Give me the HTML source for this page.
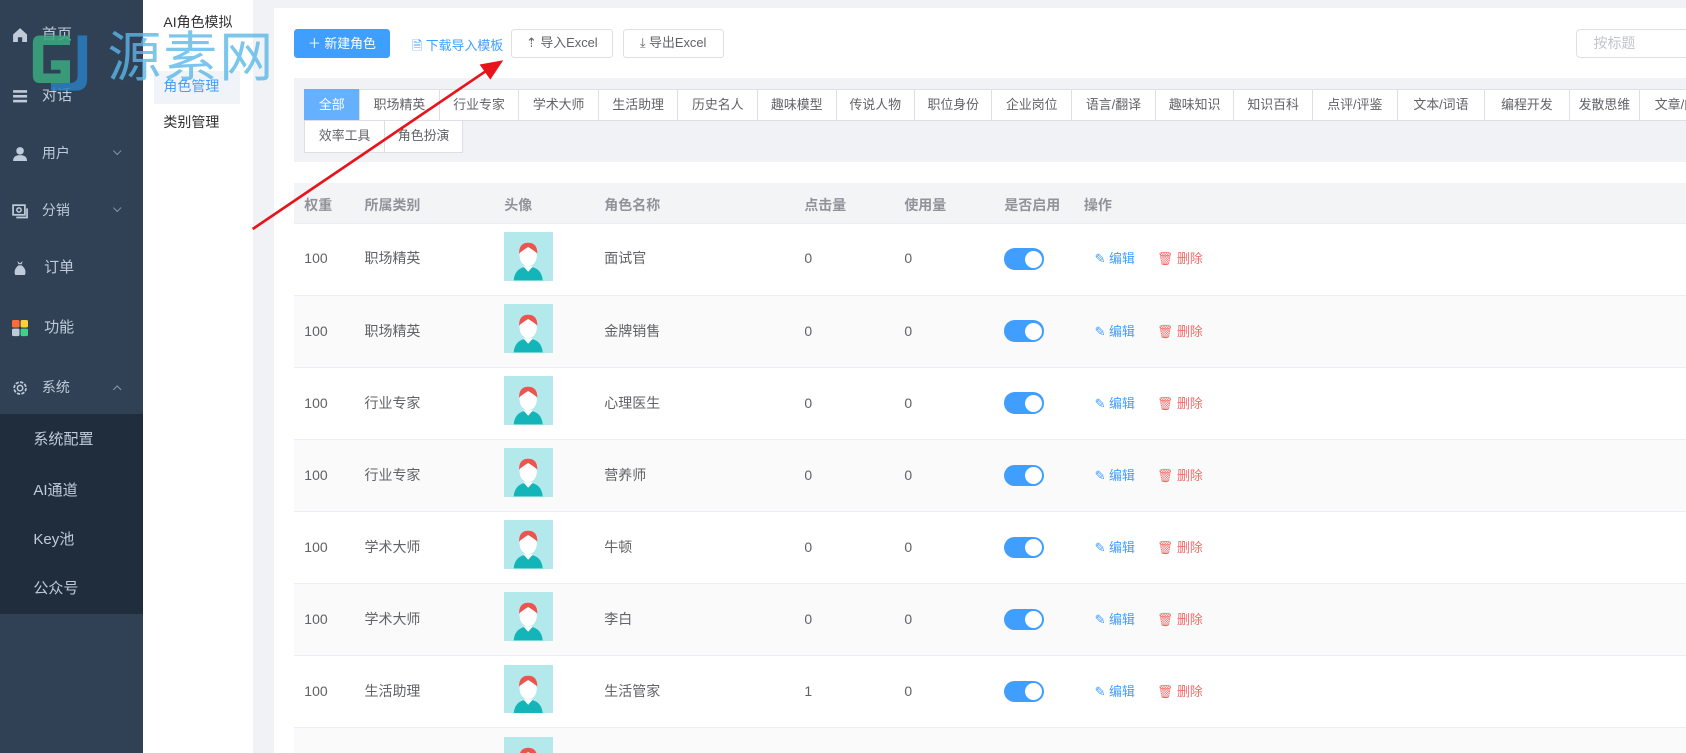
<!DOCTYPE html>
<html><head><meta charset="utf-8"><style>
*{margin:0;padding:0;box-sizing:border-box}
html,body{width:1686px;height:753px;overflow:hidden;background:#f0f2f5}
#w{zoom:1.0753;width:1568px;height:700px;position:relative;font-family:"Liberation Sans","Noto Sans CJK SC",sans-serif;font-size:13px;color:#606266;overflow:hidden}
.abs{position:absolute}
#side{left:0;top:0;width:133px;height:700px;background:#304156;color:#bfcbd9;font-size:14px}
.mi{position:absolute;left:0;width:133px;height:40px;line-height:40px}
.mi .t{position:absolute;left:39px}
.mi .ic{position:absolute;left:11px;top:13px;width:15px;height:15px}
.arr{position:absolute;left:106px;top:15px;width:6px;height:6px;border-right:1px solid #8a96a6;border-bottom:1px solid #8a96a6;transform:rotate(45deg)}
#sub{left:0;top:385px;width:133px;height:186px;background:#1f2d3d}
#sub div{position:absolute;left:31px;color:#bfcbd9;font-size:14px}
#sm{left:133px;top:0;width:102px;height:700px;background:#fff;font-size:13px;color:#303133}
#card{left:255px;top:7px;width:1313px;height:693px;background:#fff}
.btn{position:absolute;height:27px;line-height:25px;border:1px solid #dcdfe6;border-radius:3px;font-size:12px;color:#606266;text-align:center;background:#fff}
#filt{left:273px;top:73px;width:1295px;height:78px;background:#f0f2f5}
.tab{position:absolute;height:30px;line-height:28px;border:1px solid #dcdfe6;background:#fff;font-size:12px;color:#606266;text-align:center}
.row{position:absolute;left:273px;width:1295px;height:67px;border-bottom:1px solid #ebeef5;font-size:13px;color:#606266}
.row span{position:absolute;top:24px;line-height:18px;height:18px}
.sw{position:absolute;left:661px;top:23px;width:37px;height:20px;border-radius:10px;background:#409eff}
.sw:after{content:"";position:absolute;right:2px;top:2px;width:16px;height:16px;border-radius:50%;background:#fff}
.av{position:absolute;left:196px;top:8px;width:45px;height:45px;background:#b3e9ea;overflow:hidden}
</style></head><body><div id="w">
<div id="side" class="abs">
 <div class="mi" style="top:12px"><svg class="ic" viewBox="0 0 15 15"><path d="M1 7L7.5 1L14 7V14H9.5V9.5H5.5V14H1Z" fill="#bfcbd9"/></svg><span class="t">首页</span></div>
 <div class="mi" style="top:69px"><svg class="ic" viewBox="0 0 15 15"><rect x="1" y="2" width="13" height="2.4" fill="#bfcbd9"/><rect x="1" y="6.5" width="13" height="2.4" fill="#bfcbd9"/><rect x="1" y="11" width="13" height="2.4" fill="#bfcbd9"/></svg><span class="t">对话</span></div>
 <div class="mi" style="top:123px"><svg class="ic" viewBox="0 0 15 15"><circle cx="7.5" cy="4.5" r="3.5" fill="#bfcbd9"/><path d="M1 14Q1 8.5 7.5 8.5Q14 8.5 14 14Z" fill="#bfcbd9"/></svg><span class="t" style="font-size:13px">用户</span><i class="arr"></i></div>
 <div class="mi" style="top:176px"><svg class="ic" viewBox="0 0 15 15"><rect x="1" y="2" width="11" height="9" fill="none" stroke="#bfcbd9" stroke-width="1.6"/><circle cx="6.5" cy="6.5" r="2" fill="none" stroke="#bfcbd9" stroke-width="1.4"/><path d="M4 13.5H14V5" fill="none" stroke="#bfcbd9" stroke-width="1.6"/></svg><span class="t" style="font-size:13px">分销</span><i class="arr"></i></div>
 <div class="mi" style="top:229px"><svg class="ic" viewBox="0 0 15 15"><path d="M5 1L7.5 3L10 1L9 4H6Z" fill="#bfcbd9"/><path d="M6 5H9Q14 9 12 14H3Q1 9 6 5Z" fill="#bfcbd9"/></svg><span class="t" style="left:41px">订单</span></div>
 <div class="mi" style="top:285px"><svg class="ic" viewBox="0 0 15 15"><rect x="0" y="0" width="7" height="7" rx="1.5" fill="#fe6b37"/><rect x="8" y="0" width="7" height="7" rx="1.5" fill="#fcd138"/><rect x="0" y="8" width="7" height="7" rx="1.5" fill="#bfcbd9"/><rect x="8" y="8" width="7" height="7" rx="1.5" fill="#3fd08a"/></svg><span class="t" style="left:41px">功能</span></div>
 <div class="mi" style="top:340px"><svg class="ic" viewBox="0 0 15 15"><circle cx="7.5" cy="7.5" r="5.5" fill="none" stroke="#bfcbd9" stroke-width="1.6" stroke-dasharray="3 1.3"/><circle cx="7.5" cy="7.5" r="2.5" fill="none" stroke="#bfcbd9" stroke-width="1.4"/></svg><span class="t" style="font-size:13px">系统</span><i class="arr" style="transform:rotate(225deg);top:19px"></i></div>
 <div id="sub" class="abs"><div style="top:13px">系统配置</div><div style="top:60px">AI通道</div><div style="top:106px">Key池</div><div style="top:152px">公众号</div></div>
</div>
<div id="sm" class="abs">
 <div class="abs" style="left:19px;top:11px">AI角色模拟</div>
 <div class="abs" style="left:10px;top:66px;width:80px;height:31px;background:#f0f3f7"></div>
 <div class="abs" style="left:19px;top:71px;color:#409eff">角色管理</div>
 <div class="abs" style="left:19px;top:104px">类别管理</div>
</div>
<div id="card" class="abs"></div>
<!-- watermark -->
<svg class="abs" style="left:28px;top:30px;opacity:.85" width="62" height="56" viewBox="0 0 70 60"><path d="M42 2H10Q3 2 3 10V44Q3 52 10 52H42V28H22V38H32V42H14V12H42Z" fill="#3aaa80"/><path d="M50 2H60V48Q60 60 48 60H22V52H42Q50 52 50 44Z" fill="#2a7fbf"/></svg>
<div class="abs" style="left:100px;top:26px;font-size:50px;line-height:56px;color:#5bb8e8;opacity:.8;letter-spacing:2px">源素网</div>
<div class="abs" style="left:273px;top:27px;width:90px;height:27px;background:#409eff;border-radius:3px;color:#fff;font-size:12px;line-height:27px;text-align:center">＋ 新建角色</div>
<div class="abs" style="left:383px;top:33px;font-size:12px;color:#409eff">🗎 下载导入模板</div>
<div class="btn" style="left:475px;top:27px;width:95px">⇡ 导入Excel</div>
<div class="btn" style="left:579px;top:27px;width:94px">⤓ 导出Excel</div>
<div class="btn" style="left:1466px;top:27px;width:120px;text-align:left;padding-left:15px;color:#c0c4cc;font-size:13px;border-radius:4px">按标题</div>
<div id="filt" class="abs"></div>
<div class="tab" style="left:283px;top:83px;width:51px;background:#66b1ff;border-color:#66b1ff;color:#fff">全部</div>
<div class="tab" style="left:334px;top:83px;width:75px">职场精英</div>
<div class="tab" style="left:408px;top:83px;width:75px">行业专家</div>
<div class="tab" style="left:482px;top:83px;width:75px">学术大师</div>
<div class="tab" style="left:556px;top:83px;width:75px">生活助理</div>
<div class="tab" style="left:630px;top:83px;width:75px">历史名人</div>
<div class="tab" style="left:704px;top:83px;width:74px">趣味模型</div>
<div class="tab" style="left:777px;top:83px;width:74px">传说人物</div>
<div class="tab" style="left:850px;top:83px;width:73px">职位身份</div>
<div class="tab" style="left:922px;top:83px;width:75px">企业岗位</div>
<div class="tab" style="left:996px;top:83px;width:79px">语言/翻译</div>
<div class="tab" style="left:1074px;top:83px;width:74px">趣味知识</div>
<div class="tab" style="left:1147px;top:83px;width:74px">知识百科</div>
<div class="tab" style="left:1220px;top:83px;width:80px">点评/评鉴</div>
<div class="tab" style="left:1299px;top:83px;width:82px">文本/词语</div>
<div class="tab" style="left:1380px;top:83px;width:80px">编程开发</div>
<div class="tab" style="left:1459px;top:83px;width:66px">发散思维</div>
<div class="tab" style="left:1524px;top:83px;width:80px;text-align:left;padding-left:14px">文章/内容</div>
<div class="tab" style="left:283px;top:112px;width:75px">效率工具</div>
<div class="tab" style="left:357px;top:112px;width:74px">角色扮演</div>
<div class="abs" style="left:273px;top:170px;width:1295px;height:38px;background:#f3f4f6;border-bottom:1px solid #ebeef5;color:#909399;font-size:13px;font-weight:bold">
 <span class="abs" style="left:10px;top:11px">权重</span><span class="abs" style="left:66px;top:11px">所属类别</span><span class="abs" style="left:196px;top:11px">头像</span><span class="abs" style="left:289px;top:11px">角色名称</span><span class="abs" style="left:475px;top:11px">点击量</span><span class="abs" style="left:568px;top:11px">使用量</span><span class="abs" style="left:661px;top:11px">是否启用</span><span class="abs" style="left:735px;top:11px">操作</span>
</div>
<div id="rows"></div>
<script>
var d=[["职场精英","面试官",0],["职场精英","金牌销售",0],["行业专家","心理医生",0],["行业专家","营养师",0],["学术大师","牛顿",0],["学术大师","李白",0],["生活助理","生活管家",1],["生活助理","",0]];
var h="";
d.forEach(function(r,i){
var top=208+i*67;
h+='<div class="row" style="top:'+top+'px;background:'+(i%2?'#fafafa':'#fff')+'">'+
'<span style="left:10px">100</span><span style="left:66px">'+r[0]+'</span>'+
'<div class="av"><svg width="45" height="45" viewBox="0 0 45 45"><path d="M9 45Q10 33 22.5 32Q35 33 36 45Z" fill="#14b5b8"/><path d="M18 32H27L22.5 37Z" fill="#fff"/><ellipse cx="22.5" cy="22" rx="8" ry="10" fill="#fff"/><path d="M14 20Q14 10 22.5 10Q31 10 31 20Q26 16 22.5 14Q19 16 14 20Z" fill="#ef5350"/></svg></div>'+
'<span style="left:289px">'+r[1]+'</span><span style="left:475px">'+r[2]+'</span><span style="left:568px">0</span>'+
'<div class="sw"></div>'+
'<span style="left:745px;font-size:12px;color:#409eff">✎ 编辑</span><span style="left:803px;font-size:12px;color:#f56c6c">🗑 删除</span></div>';
});
document.getElementById("rows").innerHTML=h;
</script>
<svg class="abs" style="left:0;top:0" width="1568" height="700"><line x1="235" y1="213" x2="455" y2="64" stroke="#e8141c" stroke-width="2.5"/><path d="M468 56L446 60L456 74Z" fill="#e8141c"/></svg>
</div></body></html>
